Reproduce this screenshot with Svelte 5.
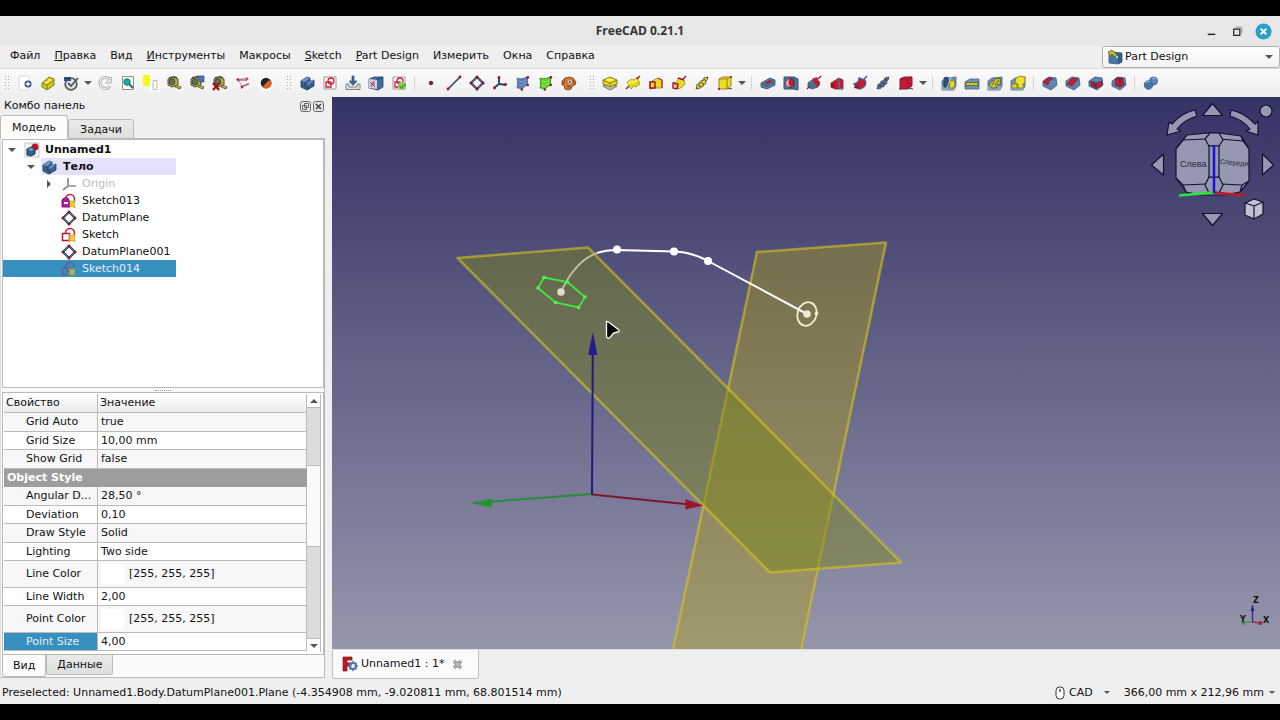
<script>
  const menus = [
    ['', 'Файл'], ['П', 'равка'], ['', 'Вид'], ['И', 'нструменты'], ['', 'Макросы'],
    ['S', 'ketch'], ['P', 'art Design'], ['', 'Измерить'], ['', 'Окна'], ['', 'Справка']
  ];

  const blueBody = '<path d="M2 6l6-4 3 1v3l4-1v6l-7 4-6-3z" fill="#3a6191" stroke="#1d3553" stroke-width=".8"/><path d="M2 6l6-4 3 1-5 4zM8 9l4-4 3 0-6 5z" fill="#7196c2"/><path d="M6 7v4l3 1v3" fill="none" stroke="#1d3553" stroke-width=".8"/>';
  const tape = '<path d="M2 4l6-2 4 2v6l-6 2-4-2z" fill="#b7b53c" stroke="#4b4d36"/><circle cx="6" cy="7" r="3" fill="#676b57" stroke="#3c3e30" stroke-width=".8"/><path d="M3 3l5-1 3 1" stroke="#55584a" stroke-width="2" fill="none"/><path d="M10 10l5 2-1 2-5-2z" fill="#cdbb48" stroke="#4a4b2f" stroke-width=".8"/>';
  const base = '<path d="M1 6l4-3 10-1v9l-2 4H1z" fill="#6c90b6" stroke="#47657f" stroke-width=".8"/><path d="M1 11h13v4H1z" fill="#86a3bf"/>';
  const redSketch = '<path d="M2 2h12v12H2z" fill="#fff" stroke="#9b9593"/><path d="M4 7h5v5H4z" fill="none" stroke="#cc1f35" stroke-width="1.300"/><circle cx="9" cy="6" r="3" fill="none" stroke="#cc1f35" stroke-width="1.300"/>';
  const helix = (c) => `<path d="M2 14L14 2" stroke="#a3142b" stroke-width="1.400"/><path d="M3 13c-1-3 0-5 3-4-1-3 1-4 3-3 0-3 2-5 4-3 1 2 0 3-2 3 2 3 0 4-2 3 1 3-1 4-3 2 1 2-1 4-3 2z" fill="${c}" stroke="#3b4143" stroke-width=".8"/><path d="M4 10l3 2M7 7l3 3M10 4l2 2" stroke="#24334a" stroke-width=".8"/>`;
  const loft = (c, b) => `<path d="M2 7l8-4 4 2v8H7l-5 1z" fill="${c}" stroke="${b}" stroke-width=".8"/><path d="M2 7h5v6H2z" fill="none" stroke="#a3142b" stroke-width="1.500"/><path d="M10 3l4 2v8" fill="none" stroke="#a3142b"/>`;
  const pipe = (c, b) => `<path d="M2 8c4 0 5-3 5-5l6 2c2 4 0 7-6 9z" fill="${c}" stroke="${b}" stroke-width=".8"/><path d="M2 8l5 1-1 5-4-1z" fill="none" stroke="#a3142b" stroke-width="1.400"/><path d="M7 3l6 2M12 4l3-3" stroke="#a3142b" stroke-width="1.400"/>`;
  const cube = (c, b) => `<path d="M2 4l4-2h8v9l-4 3H2z" fill="${c}" stroke="${b}"/><path d="M2 4h8v10M10 4l4-2" fill="none" stroke="${b}"/><path d="M2 13v2M10 13l5 1" stroke="#24517c"/>`;
  const solid = '<path d="M1 6l6-4 7 1 1 7-6 5-8-4z" fill="#5c84b0" stroke="#3b5675" stroke-width=".8"/>';
  const patch = (c, b) => `<path d="M2 3c4 2 7 0 11-1-1 3-1 5 0 8-3 1-5 2-6 5-2-2-3-2-5-2 1-4 1-6 0-10z" fill="${c}" stroke="${b}"/><path d="M4 6c3 1 5 0 7-1M4 10c2 1 5-1 7-2" stroke="#fff" opacity=".35"/><circle cx="12.800" cy="2.400" r="1.400" fill="#a3142b"/><circle cx="12.800" cy="10" r="1.200" fill="#a3142b"/><circle cx="6.800" cy="14.500" r="1.200" fill="#a3142b"/>`;
  const plane = '<path d="M8 2l6 6-6 6-6-6z" fill="none" stroke="#2a3a4e" stroke-width="2.200"/><path d="M8 2l6 6-6 6-6-6z" fill="none" stroke="#6d86a3" stroke-width=".8"/><g fill="#9a1730"><circle cx="8" cy="2" r="1.500"/><circle cx="14" cy="8" r="1.500"/><circle cx="8" cy="14" r="1.500"/><circle cx="2" cy="8" r="1.500"/></g>';
  const clamp = '<path d="M8 7c2 2 4 2 6 0v2c-1 2-1 3 0 5v1c-2-2-4-2-6 0v-2c1-2 1-3 0-5z" fill="#f0cf2c" stroke="#c29a14" stroke-width=".8"/>';

  const icons = {
    new: '<path d="M2 1h10v14H2z" fill="#fff" stroke="#d8d8d8"/><circle cx="11" cy="9" r="3.500" fill="#2d5487"/><path d="M11 6.800v4.400M8.800 9h4.400" stroke="#fff" stroke-width="1.300"/>',
    open: '<path d="M2 8l7-6 5 2v6l-7 5-5-3z" fill="#d3ca18" stroke="#827d1d"/><path d="M2 8l5 2v4M7 10l7-5M6 5l4 2" stroke="#827d1d" fill="none"/><path d="M4 8l5-4 3 1-5 4z" fill="#f3eb55"/>',
    save: '<circle cx="8" cy="9" r="5.800" fill="#e3e6e8" stroke="#596064" stroke-width="1.800"/><path d="M1 2h7v4H1z" fill="#304f78"/><path d="M5 8l3 3 7-8" fill="none" stroke="#4d565c" stroke-width="1.800"/>',
    refresh: '<path d="M13 11a5.500 5.500 0 1 1 0-6" fill="none" stroke="#aaa" stroke-width="3"/><path d="M13 11a5.500 5.500 0 1 1 0-6" fill="none" stroke="#f0f0f0" stroke-width="1.300"/><path d="M14.500 2v6h-6z" fill="#e8e8e8" stroke="#aaa" stroke-width=".8"/>',
    fit: '<path d="M2.500 1.500h11v13h-11z" fill="#f8f8f8" stroke="#8b9291"/><circle cx="7" cy="7" r="3.200" fill="#22a99a" stroke="#14796e"/><path d="M9 9l4 4" stroke="#14796e" stroke-width="2.200"/>',
    boxes: '<path d="M0 0h7v11H0z" fill="#f7f724"/><path d="M7 5h9v11H7z" fill="#fff"/><path d="M10 5.500h4v9h-4z" fill="#fafafa" stroke="#b9b9b9"/>',
    tape,
    tapeView: tape + '<path d="M8 1h7v6h-4z" fill="#4a77b5" stroke="#27436b" stroke-width=".7"/>',
    tapeDel: tape + '<path d="M1 8l6 7M7 8l-6 7" stroke="#a00d14" stroke-width="2.200"/>',
    distance: '<path d="M1 5l12-2M5 12l9-4M2 3l5 8" stroke="#aebbd0" stroke-width="1.300"/><path d="M2 5l10 0M6 12l8-3" stroke="#c82836"/><path d="M1 4l3-1v4zM14 3l-3 0v3zM6 14l0-4 3 2z" fill="#c82836"/>',
    ball: '<circle cx="8" cy="8" r="7.500" fill="#fff"/><circle cx="8" cy="8" r="5.300" fill="#20262c"/><path d="M12.700 5A5.300 5.300 0 0 1 4 11.500c3 0 4-6 8.700-6.500z" fill="#e0602c"/>',
    body: blueBody,
    sketch: redSketch,
    import: '<path d="M1 9h3v3h8V9h3v5.500H1z" fill="#d9dfe3" stroke="#758792"/><path d="M7 1h2v5h3l-4 4.500L4 6h3z" fill="#3e668f" stroke="#3a5571" stroke-width=".7"/>',
    mapSketch: '<path d="M1 4l5-2h9v10l-5 3-9-2z" fill="#416b9b" stroke="#2b4564" stroke-width=".8"/><path d="M1 4l8 1v9l-8-1z" fill="#c7d3e2"/><path d="M9 5l6-3" stroke="#2b4564"/><path d="M2 7l5 5M6 6l-3 6M3 9h4" stroke="#c2334a"/>',
    validate: redSketch + '<circle cx="11" cy="11" r="4" fill="#8dd158"/><path d="M8.500 11l2 2 4-4" fill="none" stroke="#4d932a" stroke-width="1.500"/>',
    point: '<circle cx="8" cy="8" r="1.800" fill="#8d1b31" stroke="#483342"/>',
    line: '<path d="M2 14L14 2" stroke="#344d6c" stroke-width="1.700"/><circle cx="2" cy="14" r="1.400" fill="#a3142b"/><circle cx="14" cy="2" r="1.400" fill="#a3142b"/>',
    plane,
    axes: '<path d="M7 2v7l7 1M7 9l-5 4" fill="none" stroke="#263c57" stroke-width="1.800"/><circle cx="7" cy="2.500" r="1.400" fill="#8f1a2c"/><circle cx="13.500" cy="9.500" r="1.400" fill="#8f1a2c"/><circle cx="2.500" cy="13" r="1.400" fill="#8f1a2c"/>',
    blueShape: patch('#5682b8', '#4570a2'),
    greenShape: patch('#69dc22', '#2e8b18'),
    clone: '<path d="M1 6l3-3 4-1 4 1 3 4-1 3-2 0-2 4-3 1-3-1-1-4-2 0z" fill="#cf7a38" stroke="#7f431c" stroke-width=".9"/><path d="M4 5L2 9M12 5l1 4" stroke="#7f431c"/><circle cx="9" cy="7" r="1.800" fill="#fff"/><circle cx="9" cy="7" r=".9" fill="#222"/><path d="M6 11l4 1" stroke="#70330f"/>',
    pad: '<path d="M1 11l6-3 8 3-7 4z" fill="#c5c8c6" stroke="#6b706d"/><path d="M1 5l7-3 7 3v4l-7 3-7-3z" fill="#e2d51b" stroke="#7d771f" stroke-width=".9"/><path d="M1 5l7 3 7-3M8 8v4" fill="none" stroke="#7d771f" stroke-width=".9"/><path d="M3 5l5-2L13 5 8 7z" fill="#f6ef54"/>',
    revolution: '<path d="M2 7l5-3 2 1 3-3 3 7-4 3-2-1-3 3z" fill="#e1d41b" stroke="#a0962b" stroke-width=".8"/><path d="M3 7l4-2 2 1 3-2 1 2-4 3-2-1-3 2z" fill="#f4ec4c"/><path d="M1 14l3-3M12 4l3-3" stroke="#a3142b" stroke-width="1.400"/>',
    loft: loft('#e9db25', '#8a8228'),
    pipe: pipe('#e9db25', '#8a8228'),
    helix: helix('#ded61f'),
    box: cube('#eadf25', '#a6801f') + '<circle cx="2" cy="14" r="1" fill="#a3142b"/><circle cx="14" cy="2" r="1" fill="#a3142b"/>',
    pocket: '<path d="M1 8l9-5 5 2v5l-8 4-6-2z" fill="#55799f" stroke="#33506f" stroke-width=".8"/><path d="M1 8l6 3 8-5" fill="none" stroke="#33506f" stroke-width=".8"/><path d="M4 8l6-3 3 1-6 3z" fill="#a91a32"/>',
    hole: '<path d="M1 2h10l4 2v11l-4-1H1z" fill="#4f779f" stroke="#33506f"/><path d="M11 2v12" stroke="#33506f"/><ellipse cx="7" cy="8" rx="4" ry="4.500" fill="#c41c35" stroke="#54303e"/><path d="M7 4c-2 1-2 7 1 8-7 1-6-8-1-8z" fill="#e6a6ae"/>',
    groove: '<path d="M2 8l7-5 5 4-2 5-6 2-4-2z" fill="#4c7094" stroke="#33506f" stroke-width=".8"/><path d="M6 4l5 8 3-2-3-8z" fill="#c41c35"/><path d="M1 14l3-3M12 4l3-3" stroke="#a3142b" stroke-width="1.400"/>',
    cutLoft: '<path d="M2 8l8-5 4 2v9H6l-4-2z" fill="#c41c35" stroke="#7b2037" stroke-width=".8"/><path d="M2 8h4v5H2z" fill="#a3142b"/><path d="M10 3v10l4 1" fill="none" stroke="#4d759e" stroke-width="1.300"/>',
    cutPipe: '<path d="M2 9c4-1 5-4 5-6l6 2c2 4 0 8-6 9z" fill="#c41c35" stroke="#4d5c86" stroke-width="1.300"/><path d="M3 10l4 1-1 3-4-1z" fill="#8d1731"/><path d="M12 4l3-3" stroke="#3d628c" stroke-width="1.500"/>',
    cutHelix: helix('#4c7094'),
    cutBox: cube('#ca1a33', '#8a1d35'),
    mirror: base + '<path d="M3 3l3-1 2 5-1 5H3z" fill="#2f5277" stroke="#2b4564"/><path d="M9 6l4-1 1 5-2 3H8z" fill="#e2d72c" stroke="#8a8228"/><path d="M6 13l4-11" stroke="#eee" stroke-width=".8"/>',
    linear: '<path d="M1 7l5-3 9 0v10H1z" fill="#6c90b6" stroke="#47657f" stroke-width=".8"/><path d="M2 8l3-1 1 1 3-1 1 1 4-1v3l-3 1-1-1-3 1-1-1-4 1z" fill="#dcd12a" stroke="#4f5938" stroke-width=".9"/>',
    polar: base + '<path d="M2 10l3-4 2 0 2-3 5 1-1 3 1 2-4 1-1 3-4 0z" fill="#c8c02a" stroke="#535c38" stroke-width=".9"/><path d="M5 10l2-3M8 10l4-5" stroke="#535c38"/>',
    multi: base + '<path d="M6 3l4-2 5 1v5l-2 2v4H8V9L5 8z" fill="#ecdf27" stroke="#8a8228" stroke-width=".9"/><path d="M2 9h5v4H2z" fill="#e2d72c" stroke="#8a8228" stroke-width=".9"/>',
    fillet: solid + '<path d="M2 8c1-5 5-6 9-4-3 1-5 3-5 6z" fill="#c41c35" stroke="#71283c" stroke-width=".7"/>',
    chamfer: solid + '<path d="M2 9l5-6 6 1-6 7z" fill="#c41c35" stroke="#71283c" stroke-width=".7"/>',
    draft: solid + '<path d="M3 6l5 2 6-2v5l-6 2-5-2z" fill="#c41c35" stroke="#5a3450" stroke-width=".8"/><path d="M8 8v6M6 7v5" stroke="#2b3850"/>',
    thickness: solid + '<path d="M5 3l6 0 2 7-4 2-5-2z" fill="#c41c35" stroke="#63334b"/><path d="M5 3l4 2 3-1M9 5v6" stroke="#7b172d" fill="none"/>',
    boolean: '<circle cx="10.500" cy="6" r="4" fill="#5d87b4" stroke="#4068a0"/><circle cx="5.500" cy="10" r="4.200" fill="#4975a6" stroke="#3b6290"/><path d="M3 8c1-2 3-2 4-1M9 4c1-1 3-1 4 0" stroke="#a9c3df" fill="none"/>',
    workbench: '<path d="M2 5l5-2 8 1v9l-4 2-9-1z" fill="#4c77a3" stroke="#34587e" stroke-width=".8"/><path d="M2 5l9 1v9l4-2V4z" fill="#335d88"/><path d="M1 3l4-2 5 5-2 2-3-3-2 2z" fill="#bdb52b" stroke="#6b6722" stroke-width=".8"/><circle cx="10" cy="8" r="1" fill="#eee"/>',
    doc: '<path d="M1 1h14v14H1z" fill="#f4f4f4" stroke="#c5c5c5"/><circle cx="11" cy="5" r="3.500" fill="#b8182c"/><path d="M3 7l4-2 4 2v5l-4 2-4-1z" fill="#34618e" stroke="#1c3550"/><path d="M4 7l3-1 3 1-3 2z" fill="#81a5c8"/>',
    origin: '<path d="M7 2v8h8M7 10l-5 4" fill="none" stroke="#8d8d8d" stroke-width="1.700"/>',
    sketchPurple: '<circle cx="9" cy="6" r="4.500" fill="#fff" stroke="#bd1730" stroke-width="1.500"/>' + clamp + '<path d="M1 7l2-2h4l1 3v6H1z" fill="#b416b4" stroke="#82107f"/><path d="M3 9h4v2H3z" fill="#fff"/>',
    sketchRed: '<circle cx="9" cy="6" r="4.500" fill="#fff" stroke="#bd1730" stroke-width="1.500"/><path d="M1.500 6.500h7v7h-7z" fill="#fff" stroke="#bd1730" stroke-width="1.500"/>' + clamp,
    sketchDim: '<g opacity=".65"><circle cx="9" cy="6" r="4.500" fill="none" stroke="#7a4974" stroke-width="1.500"/><path d="M1.500 6.500h7v7h-7z" fill="none" stroke="#7a4974" stroke-width="1.500"/>' + clamp + '</g>',
    freecad: '<path d="M1 1h9v3H5v3h4v3H5v5H1z" fill="#bd1828" stroke="#7b101b" stroke-width=".7"/><circle cx="11" cy="10" r="3" fill="none" stroke="#5876ab" stroke-width="2.200"/><path d="M11 4.800v2M11 13.200v2M5.800 10h2M14.200 10h2M7.500 6.500l1.200 1.200M13.300 12.300l1.200 1.200M14.500 6.500l-1.200 1.200M8.700 12.300l-1.200 1.200" stroke="#5876ab" stroke-width="1.500"/>'
  };

  const toolbar = [
    'grip', 'new', 'open', 'save', 'drop', 'refresh', 'fit', 'boxes', 'tape', 'tapeView', 'tapeDel', 'distance', 'ball',
    'grip', 'body', 'sketch', 'import', 'mapSketch', 'validate', 'sep',
    'point', 'line', 'plane', 'axes', 'blueShape', 'greenShape', 'clone',
    'grip', 'pad', 'revolution', 'loft', 'pipe', 'helix', 'box', 'drop', 'sep',
    'pocket', 'hole', 'groove', 'cutLoft', 'cutPipe', 'cutHelix', 'cutBox', 'drop', 'sep',
    'mirror', 'linear', 'polar', 'multi', 'sep', 'fillet', 'chamfer', 'draft', 'thickness', 'sep', 'boolean'
  ];

  const tree = [
    { t: 'Unnamed1', i: 'doc', level: 0, bold: true, arrow: 'open' },
    { t: 'Тело', i: 'body', level: 1, bold: true, arrow: 'open', active: true },
    { t: 'Origin', i: 'origin', level: 2, dim: true, arrow: 'closed' },
    { t: 'Sketch013', i: 'sketchPurple', level: 2 },
    { t: 'DatumPlane', i: 'plane', level: 2 },
    { t: 'Sketch', i: 'sketchRed', level: 2 },
    { t: 'DatumPlane001', i: 'plane', level: 2 },
    { t: 'Sketch014', i: 'sketchDim', level: 2, selected: true }
  ];

  const props = [
    ['Grid Auto', 'true'], ['Grid Size', '10,00 mm'], ['Show Grid', 'false'], ['Object Style'],
    ['Angular D...', '28,50 °'], ['Deviation', '0,10'], ['Draw Style', 'Solid'], ['Lighting', 'Two side'],
    ['Line Color', '[255, 255, 255]', 'color'], ['Line Width', '2,00'],
    ['Point Color', '[255, 255, 255]', 'color'], ['Point Size', '4,00', 'selected']
  ];
</script>

{#snippet icon(name)}
  <svg class="icon" viewBox="0 0 16 16" aria-hidden="true">{@html icons[name]}</svg>
{/snippet}

<div class="window">
  <header class="titlebar">
    <h1>FreeCAD 0.21.1</h1>
    <div class="controls">
      <button aria-label="Свернуть"><svg viewBox="0 0 18 18"><path d="M5 12h8" stroke="#222" stroke-width="1.500" /></svg></button>
      <button aria-label="Восстановить"><svg viewBox="0 0 18 18"><path d="M7 4.500h6.500v6.500" fill="none" stroke="#888" /><path d="M5 6.500h6.500v6.500H5z" fill="none" stroke="#222" stroke-width="1.300" /></svg></button>
      <button aria-label="Закрыть"><svg viewBox="0 0 18 18"><circle cx="9" cy="9" r="8.500" fill="#2e9fca" /><path d="M6 6l6 6M12 6l-6 6" stroke="#fff" stroke-width="2" /></svg></button>
    </div>
  </header>

  <div class="menurow">
    <nav>
      {#each menus as [u, rest]}<button><u>{u}</u>{rest}</button>{/each}
    </nav>
    <div class="workbench">
      {@render icon('workbench')}
      <select aria-label="Верстак"><option>Part Design</option></select>
      <span class="down"></span>
    </div>
  </div>

  <div class="toolbar">
    {#each toolbar as t}
      {#if t === 'grip'}<span class="grip"></span>
      {:else if t === 'sep'}<span class="sep"></span>
      {:else if t === 'drop'}<button class="drop" aria-label="Ещё"><span class="down"></span></button>
      {:else}<button class="tool" aria-label={t}>{@render icon(t)}</button>{/if}
    {/each}
  </div>

  <main>
    <aside>
      <div class="docktitle">
        <span>Комбо панель</span>
        <button aria-label="Открепить"><svg viewBox="0 0 11 11"><rect x=".5" y=".5" width="10" height="10" rx="2" fill="#e8e8e8" stroke="#666" /><path d="M4.500 2.500h4v4h-4zM2.500 4.500h4v4h-4z" fill="none" stroke="#666" /></svg></button>
        <button aria-label="Закрыть панель"><svg viewBox="0 0 11 11"><rect x=".5" y=".5" width="10" height="10" rx="2" fill="#e8e8e8" stroke="#666" /><path d="M3 3l5 5M8 3l-5 5" stroke="#444" stroke-width="1.500" /></svg></button>
      </div>
      <div class="tabs top" role="tablist">
        <button class="on" role="tab" aria-selected="true">Модель</button>
        <button role="tab" aria-selected="false">Задачи</button>
      </div>
      <div class="body">
        <div class="tree" role="tree">
          {#each tree as n}
            <div class="node l{n.level}" class:bold={n.bold} class:dim={n.dim} class:selected={n.selected} role="treeitem" aria-selected={!!n.selected}>
              <span class="twist">{#if n.arrow}<span class={n.arrow === 'open' ? 'down' : 'right'}></span>{/if}</span>
              <span class="label" class:active={n.active}>{@render icon(n.i)}{n.t}</span>
            </div>
          {/each}
        </div>
        <div class="splitter"><span></span></div>
        <div class="props">
          <table>
            <thead><tr><th>Свойство</th><th>Значение</th></tr></thead>
            <tbody>
              {#each props as [k, v, kind]}
                {#if v}
                  <tr class={kind}><td class="key"><span>{k}</span></td><td>{#if kind === 'color'}<i></i>{/if}{v}</td></tr>
                {:else}
                  <tr class="group"><td colspan="2">{k}</td></tr>
                {/if}
              {/each}
            </tbody>
          </table>
          <div class="scroll">
            <button aria-label="Вверх"><span class="up"></span></button>
            <div class="track"><div class="thumb"></div></div>
            <button aria-label="Вниз"><span class="down"></span></button>
          </div>
        </div>
        <div class="tabs bottom" role="tablist">
          <button class="on" role="tab" aria-selected="true">Вид</button>
          <button role="tab" aria-selected="false">Данные</button>
        </div>
      </div>
    </aside>

    <section>
      <div class="viewport">
        <svg class="scene" viewBox="332 97 948 552" preserveAspectRatio="xMidYMid slice" aria-label="3D вид">
          <path d="M592 494L473 503" stroke="#298c38" stroke-width="2" />
          <path d="M472.500 503.500l19-5v9z" fill="#239334" />
          <path d="M592 494.500L690 504.500" stroke="#7d182c" stroke-width="2" />
          <path d="M757 252L886 242.500L800.500 652H672.500z" fill="#af9e0f" fill-opacity=".41" stroke="#d5c51d" stroke-opacity=".6" stroke-width="2.500" stroke-linejoin="round" />
          <path d="M597 253Q606 250 617 250L674 251.500C689 252 699 256 708 261L807 314" fill="none" stroke="#fff" stroke-width="2" />
          <path d="M457.500 258L588 247.500L901 562.500L770 572.500z" fill="#7d841a" fill-opacity=".46" stroke="#d5c51d" stroke-opacity=".6" stroke-width="2.500" stroke-linejoin="round" />
          <path d="M592 495L592.800 350" stroke="#211b7c" stroke-width="2" />
          <path d="M592.800 332l4.500 23h-9z" fill="#211b8c" />
          <path d="M561 292C571 270 583 258 597 253" fill="none" stroke="#c4c1a4" stroke-width="1.800" />
          <path d="M685.500 499l18 6.500l-18 4z" fill="#99162c" />
          <path d="M544 277.500L567.500 282L585 297L578.500 307.500L555.500 302.500L538 288z" fill="none" stroke="#3fe83f" stroke-width="1.800" />
          <g fill="#55f550"><circle cx="544" cy="277.500" r="1.800" /><circle cx="567.500" cy="282" r="1.800" /><circle cx="585" cy="297" r="1.800" /><circle cx="578.500" cy="307.500" r="1.800" /><circle cx="555.500" cy="302.500" r="1.800" /><circle cx="538" cy="288" r="1.800" /></g>
          <g fill="#fff"><circle cx="617" cy="249.500" r="4" /><circle cx="674" cy="251.500" r="4" /><circle cx="708" cy="261" r="4" /></g>
          <circle cx="561" cy="292" r="3.800" fill="#dfdcc5" />
          <ellipse cx="807" cy="314" rx="9.500" ry="12" transform="rotate(17 807 314)" fill="none" stroke="#f6f0c8" stroke-width="1.800" />
          <circle cx="807" cy="314" r="3.800" fill="#eee8cc" /><circle cx="816.500" cy="313.500" r="1.800" fill="#f6f0c8" />
          <path d="M606.500 322.500Q606 320.500 608.500 322L619 330Q620 332 617.500 332L613.500 333L610 337.500Q607 339.500 606.500 336z" fill="#000" stroke="#fff" stroke-width="1.300" />
        </svg>

        <svg class="navcube" viewBox="1148 98 130 132" aria-label="Навигационный куб">
          <g fill="#9697b2" stroke="#11112e" stroke-width="1.200" stroke-linejoin="round">
            <path d="M1212.500 103.500l10 12h-20z" /><path d="M1212.500 225.500l-10-12h20z" />
            <path d="M1151.500 165l12-11v21z" /><path d="M1273.500 165l-11-11v21z" />
            <path d="M1195 110l2 6q-13 4-20 13l4 2-14 4 2-13 3 2q9-11 23-14z" />
            <path d="M1231 110l-1 6q13 4 20 13l-4 2 12 4 0-14-3 3q-10-11-24-14z" />
            <circle cx="1266" cy="111" r="6" />
            <path d="M1187 135L1209 133H1219L1241 136L1249 149V181L1240 192L1224 195H1201L1186 192L1176 178V149Z" />
            <path d="M1187 135L1183 140L1206 139M1183 140L1176 149M1220 139L1243 141L1241 136M1243 141L1249 149M1183 185L1206 184M1183 185L1176 178M1221 184L1242 185L1249 181M1242 185L1240 192M1183 185L1186 192" fill="none" />
            <path d="M1205 139l5-6h9l4 7-4 6h-10zM1205 185l4-8h10l4 8-4 8h-10z" />
            <path d="M1209 146h10v31h-10z" />
            <path d="M1245 203l9-4 9 3v12l-9 5-9-4z" fill="#c0c1d2" /><path d="M1245 203l9 3 9-4M1254 206v13" fill="none" />
          </g>
          <path d="M1179 195.500L1214 192.500" stroke="#26e638" stroke-width="2.600" />
          <path d="M1214 192.500L1246 195.500" stroke="#c11a28" stroke-width="2.600" />
          <path d="M1214 193V145" stroke="#1616d8" stroke-width="2.500" />
          <text x="1180" y="167" class="left">Слева</text>
          <text x="1220" y="164" class="front" transform="rotate(4 1220 164)">Спереди</text>
        </svg>

        <svg class="axis" viewBox="1238 592 34 34" aria-hidden="true">
          <path d="M1253 621h-10" stroke="#38924b" stroke-width="1.300" /><circle cx="1243.500" cy="622" r="2" fill="#38924b" />
          <path d="M1252.500 621l9 1" stroke="#9c2b43" stroke-width="1.300" /><circle cx="1260.500" cy="622" r="2" fill="#9c2b43" />
          <path d="M1252.500 621v-14" stroke="#282889" stroke-width="1.300" /><path d="M1252.500 603l2 7h-4z" fill="#282889" />
          <text x="1253" y="602">Z</text><text x="1240" y="621">Y</text><text x="1263" y="622">X</text>
        </svg>
      </div>
      <div class="docs">
        <div class="doc">
          {@render icon('freecad')}
          <span>Unnamed1 : 1*</span>
          <button aria-label="Закрыть вкладку"><svg viewBox="0 0 11 11"><path d="M2 2l7 7M9 2l-7 7" stroke="#85857e" stroke-width="3.200" /><path d="M2 2l7 7M9 2l-7 7" stroke="#c5c5bb" stroke-width="1.300" /></svg></button>
        </div>
      </div>
    </section>
  </main>

  <footer>
    <span class="msg">Preselected: Unnamed1.Body.DatumPlane001.Plane (-4.354908 mm, -9.020811 mm, 68.801514 mm)</span>
    <button class="nav"><svg viewBox="0 0 10 14"><rect x="1" y="1" width="8" height="12" rx="3.500" fill="#fafafa" stroke="#333" /><path d="M5 3v3" stroke="#333" stroke-width="1.300" /></svg>CAD<span class="down small"></span></button>
    <button class="dims">366,00 mm x 212,96 mm<span class="down small"></span></button>
  </footer>
</div>

<style>
  :global(body) { background: #000; }
  .window {
    box-sizing: border-box; min-height: 100vh; border: solid #000; border-width: 16px 0;
    display: flex; flex-direction: column; background: #efefef; color: #111;
    font: 11px/16px "DejaVu Sans", sans-serif; overflow: hidden;
  }
  button, select { font: inherit; color: inherit; background: none; border: 0; padding: 0; margin: 0; }
  svg { display: block; }
  .icon { width: 16px; height: 16px; flex: none; }

  .down, .up, .right { display: block; width: 0; height: 0; border: 4px solid transparent; }
  .down { border-top-color: #555; border-bottom-width: 0; }
  .up { border-bottom-color: #555; border-top-width: 0; }
  .right { border-left-color: #555; border-right-width: 0; }
  .small { border-width: 3px 3px 0; }

  .titlebar { display: grid; grid-template-columns: 1fr auto 1fr; align-items: center; height: 30px; background: #e7e7e7; }
  h1 { grid-column: 2; margin: 0; font: bold 12px/16px "Open Sans", sans-serif; color: #333; }
  .controls { display: flex; justify-content: flex-end; gap: 9px; padding-right: 8px; }
  .controls svg { width: 17px; height: 17px; }

  .menurow { display: flex; justify-content: space-between; height: 22px; background: #efefef; }
  nav { display: flex; align-items: flex-start; padding: 0 3px; }
  nav button { padding: 2px 7px; line-height: 16px; }
  .workbench {
    display: flex; align-items: center; gap: 2px; width: 178px; box-sizing: border-box; padding: 0 6px 0 4px;
    border: 1px solid #b1b1b1; border-radius: 3px; background: linear-gradient(#fff, #f3f3f3);
  }
  select { flex: 1; appearance: none; outline: 0; height: 16px; }

  .toolbar { display: flex; align-items: center; height: 28px; border-top: 1px solid #dcdcdc; background: linear-gradient(#fbfbfb, #eee); }
  .tool { width: 23px; height: 24px; display: grid; place-items: center; flex: none; }
  .drop { width: 11px; height: 24px; display: grid; place-items: center; flex: none; }
  .grip { width: 6px; height: 16px; margin: 0 3px 0 9px; flex: none; background: radial-gradient(circle, #aaa 1px, transparent 1px) 0 0 / 3px 3px; }
  .toolbar .grip:first-child { margin: 0 3px 0 4px; }
  .sep { width: 1px; height: 14px; margin: 0 4px; flex: none; background: #d4d4d4; }

  main { flex: 1; display: flex; }
  aside { width: 325px; flex: none; display: flex; flex-direction: column; margin-right: 7px; padding-bottom: 3px; }
  .docktitle { display: flex; align-items: center; gap: 2px; height: 18px; padding: 0 1px 0 4px; }
  .docktitle span { flex: 1; }
  .docktitle svg { width: 11px; height: 11px; }

  .tabs { display: flex; }
  .tabs button { height: 20px; border: 1px solid #bbb; background: linear-gradient(#eaeaea, #dedede); }
  .tabs .on { height: 24px; background: #fcfcfc; }
  .top { align-items: flex-end; position: relative; margin-bottom: -1px; }
  .top button { padding: 1px 11px 0; border-radius: 3px 3px 0 0; }
  .top .on { border-bottom-color: #fcfcfc; }
  .bottom { align-items: flex-start; margin-left: 1px; }
  .bottom button { padding: 0 10px; border-radius: 0 0 3px 3px; border-top: 0; }
  .bottom .on { height: 22px; }

  .body { flex: 1; display: flex; flex-direction: column; border: 1px solid #b9b9b9; border-left-color: #ddd; background: #fafafa; }
  .tree { flex: 1; margin: 0 0 0 1px; padding-top: 1px; border: 1px solid #b9b9b9; background: #fff; }
  .node { display: flex; align-items: center; height: 17px; width: 173px; }
  .l0 { padding-left: 5px; box-sizing: border-box; }
  .l1 { padding-left: 24px; box-sizing: border-box; }
  .l2 { padding-left: 44px; box-sizing: border-box; }
  .twist { width: 14px; display: flex; flex: none; }
  .l0 .twist { margin-right: 2px; }
  .label { flex: 1; display: flex; align-items: center; gap: 5px; height: 17px; }
  .active { gap: 6px; background: #e3e1fb; }
  .bold { font-weight: bold; }
  .dim { color: #bbb; }
  .selected.node { background: #378fc0; color: #e4f0f7; }
  .splitter { height: 4px; display: grid; place-items: center; }
  .splitter span { width: 16px; border-top: 1px dotted #999; }

  .props { display: flex; margin: 0 0 0 1px; padding: 1px 2px 2px 1px; height: 258px; border: 1px solid #b9b9b9; overflow: hidden; background: #fff; }
  table { flex: 1; border-collapse: separate; border-spacing: 0; table-layout: fixed; align-self: flex-start; }
  th { height: 18px; padding: 0 2px; text-align: left; font-weight: normal; background: linear-gradient(#fff, #ececec); border: solid #bbb; border-width: 0 1px 1px 0; }
  th:first-child { width: 89px; }
  td { box-sizing: border-box; height: 19px; padding: 0 3px; line-height: 16px; border: solid #bbb; border-width: 0 1px 1px 0; }
  tr:nth-child(even) td { height: 18px; }
  tr:nth-child(odd) td { background: #f7f7f7; }
  tbody tr.color td { height: 27px; }
  td.key { padding-left: 22px; white-space: nowrap; }
  tr.group td { background: #9d9d9d; color: #fff; font-weight: bold; border-color: #9d9d9d; }
  tr.selected td.key { background: #378fc0; color: #e4f0f7; }
  i { display: inline-block; width: 23px; height: 20px; margin-right: 5px; vertical-align: middle; background: #fff; }
  .scroll { width: 13px; display: flex; flex-direction: column; border-right: 1px solid #bbb; }
  .scroll button { height: 13px; display: grid; place-items: center; flex: none; }
  .track { flex: 1; border: solid #bbb; border-width: 1px 0; background: #dcdcdc; padding-top: 57px; }
  .thumb { height: 80px; border: solid #bbb; border-width: 1px 0; background: #fafafa; }

  section { flex: 1; min-width: 0; display: flex; flex-direction: column; }
  .viewport { flex: 1; position: relative; overflow: hidden; background: linear-gradient(#343366, #9696ac); border-bottom: 1px solid #ddd; }
  .scene { position: absolute; inset: 0; width: 100%; height: 100%; }
  .navcube { position: absolute; top: 1px; right: 2px; width: 130px; height: 132px; }
  .axis { position: absolute; right: 8px; bottom: 22px; width: 34px; height: 34px; }
  .axis text { font: bold 8px "DejaVu Sans", sans-serif; fill: #111; }
  .left { font: 9px "Liberation Sans", sans-serif; fill: #24243c; }
  .front { font: 7px "Liberation Sans", sans-serif; fill: #24243c; }
  .docs { height: 31px; }
  .doc { display: inline-flex; align-items: center; gap: 3px; height: 28px; padding: 0 15px 0 9px; border: 1px solid #c0c0c0; border-top: 0; border-radius: 0 0 3px 3px; background: #fbfbfb; }
  .doc button { margin-left: 5px; }
  .doc button svg { width: 11px; height: 11px; }

  footer { display: flex; align-items: center; height: 23px; padding: 0 5px 0 2px; }
  .msg { flex: 1; }
  footer button { display: flex; align-items: center; }
  .nav svg { width: 10px; height: 14px; margin-right: 4px; }
  .nav .down { margin-left: 11px; }
  .dims { margin-left: 14px; }
  .dims .down { margin-left: 5px; }
</style>
